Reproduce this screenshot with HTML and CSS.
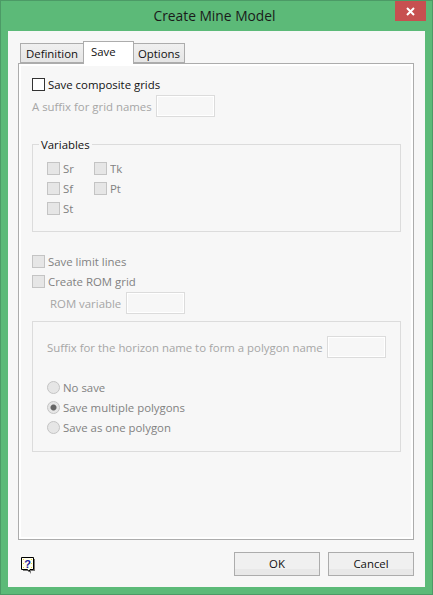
FILE: index.html
```html
<!DOCTYPE html>
<html>
<head>
<meta charset="utf-8">
<title>Create Mine Model</title>
<link rel="stylesheet" href="styles.css">
</head>
<body>
<div class="window">
    <div class="titlebar">
        Create Mine Model
        <div class="close">
            <svg width="9" height="9" viewBox="0 0 9 9"><path d="M1 1L8 8M8 1L1 8" stroke="#fff" stroke-width="2"/></svg>
        </div>
    </div>
    <div class="client">
        <div class="tabs">
            <div class="tab tab-def">Definition</div>
            <div class="tab tab-save active">Save</div>
            <div class="tab tab-opt">Options</div>
        </div>
        <div class="pane">
            <div class="row first"><span class="check on"></span><span class="dark">Save composite grids</span></div>
            <div class="field suffix"><span>A suffix for grid names</span><span class="input"></span></div>

            <div class="group vars">
                <div class="legend">Variables</div>
                <div class="var-grid">
                    <div class="row"><span class="check"></span><span class="muted">Sr</span></div>
                    <div class="row"><span class="check"></span><span class="muted">Tk</span></div>
                    <div class="row"><span class="check"></span><span class="muted">Sf</span></div>
                    <div class="row"><span class="check"></span><span class="muted">Pt</span></div>
                    <div class="row"><span class="check"></span><span class="muted">St</span></div>
                </div>
            </div>

            <div class="row limit"><span class="check"></span><span class="muted">Save limit lines</span></div>
            <div class="row rom"><span class="check"></span><span class="muted">Create ROM grid</span></div>
            <div class="field romvar"><span>ROM variable</span><span class="input"></span></div>

            <div class="group polys">
                <div class="field polyname"><span>Suffix for the horizon name to form a polygon name</span><span class="input"></span></div>
                <div class="radios">
                    <div class="row"><span class="radio"></span><span class="muted">No save</span></div>
                    <div class="row"><span class="radio sel"></span><span class="muted">Save multiple polygons</span></div>
                    <div class="row"><span class="radio"></span><span class="muted">Save as one polygon</span></div>
                </div>
            </div>
        </div>
        <div class="footer">
            <svg class="help" width="16" height="18" viewBox="0 0 16 18">
                <path d="M2 2H14V14H10V17L8 14H2Z" fill="#777" transform="translate(1 1)"/>
                <path d="M1.500 1.500H13.500V13.500H10L9 15.500L7.500 13.500H1.500Z" fill="#fffef0" stroke="#000"/>
                <path d="M3 3h1v1H3zM11 3h1v1h-1zM3 7h1v1H3zM11 7h1v1h-1zM3 11h1v1H3zM11 11h1v1h-1z" fill="#e6d83c"/>
                <text x="7.500" y="11.500" class="help-mark">?</text>
            </svg>
            <div class="buttons">
                <div class="btn">OK</div>
                <div class="btn">Cancel</div>
            </div>
        </div>
    </div>
</div>
</body>
</html>
```

FILE: styles.css
```css
html, body {
  margin: 0;
  padding: 0;
}

body {
  width: 433px;
  height: 595px;
  overflow: hidden;
  font-family: "Open Sans", "Noto Sans", sans-serif;
  font-size: 11.4px;
  color: #a6a6a6;
  white-space: nowrap;
}

.window {
  position: relative;
  box-sizing: border-box;
  width: 433px;
  height: 595px;
  background-color: #5cba78;
  border: 1px solid #4c9a66;
  padding: 0 7px 7px 7px;
}

.titlebar {
  height: 30px;
  line-height: 30px;
  text-align: center;
  font-size: 13.8px;
  color: #1a1a1a;
  padding-right: 4px;
}

.close {
  position: absolute;
  top: 0;
  right: 6px;
  width: 31px;
  height: 20px;
  background-color: #c75050;
  display: flex;
  align-items: center;
  justify-content: center;
}

.client {
  height: 556px;
  background-color: #f7f7f7;
  padding: 10px 11px 0 10px;
  box-sizing: border-box;
}

.tabs {
  display: flex;
  align-items: flex-end;
  height: 23px;
  padding-left: 2px;
  margin-bottom: -1px;
  position: relative;
  z-index: 1;
}

.tab {
  box-sizing: border-box;
  height: 20px;
  line-height: 19px;
  text-align: center;
  color: #111;
  background: linear-gradient(#f0f0f0, #e5e5e5);
  border: 1px solid #acacac;
  margin-bottom: 1px;
}

.tab-def {
  width: 63px;
  border-right: none;
}

.tab-save {
  width: 51px;
  height: 23px;
  background: #fff;
  margin-bottom: 0;
  border-bottom: none;
  line-height: 20px;
  text-align: left;
  padding-left: 7px;
}

.tab-opt {
  width: 51px;
  border-left: none;
}

.pane {
  box-sizing: border-box;
  height: 477px;
  border: 1px solid #acacac;
  box-shadow: inset 0 0 0 2px #fff;
  padding: 14px 12px 0 13px;
}

.row {
  display: flex;
  align-items: center;
  height: 13px;
  gap: 3px;
}

.dark {
  color: #111;
}

.muted {
  color: #6d6d6d;
  opacity: .85;
}

.check {
  box-sizing: border-box;
  width: 13px;
  height: 13px;
  background-color: #e6e6e6;
  border: 1px solid #c4c4c4;
  flex: none;
}

.check.on {
  background-color: #fff;
  border-color: #333;
}

.radio {
  box-sizing: border-box;
  width: 13px;
  height: 13px;
  border-radius: 50%;
  background-color: #e6e6e6;
  border: 1px solid #c4c4c4;
  flex: none;
}

.radio.sel {
  background: radial-gradient(circle, #666 0, #666 2.500px, #e6e6e6 3.500px);
}

.field {
  display: flex;
  align-items: center;
  justify-content: space-between;
}

.input {
  box-sizing: border-box;
  width: 59px;
  height: 22px;
  background-color: #f7f7f7;
  border: 1px solid #dcdcdc;
  box-shadow: inset 0 0 0 1px #fff;
  flex: none;
}

.suffix {
  width: 183px;
  margin-top: 4px;
}

.group {
  box-sizing: border-box;
  width: 369px;
  border: 1px solid #dcdcdc;
}

.vars {
  height: 88px;
  margin-top: 27px;
  padding: 18px 0 0 14px;
}

.legend {
  margin: -27px 0 9px -8px;
  padding: 0 2px;
  width: fit-content;
  line-height: 17px;
  background-color: #f7f7f7;
  color: #111;
}

.var-grid {
  display: grid;
  grid-template-columns: 47px 47px;
  row-gap: 7px;
}

.limit {
  margin-top: 23px;
}

.rom {
  margin-top: 7px;
}

.romvar {
  width: 135px;
  margin: 4px 0 0 18px;
}

.polys {
  height: 131px;
  margin-top: 7px;
  padding: 14px 14px 0 14px;
}

.radios {
  display: flex;
  flex-direction: column;
  gap: 7px;
  margin-top: 23px;
}

.footer {
  display: flex;
  justify-content: space-between;
  align-items: center;
  height: 24px;
  margin-top: 12px;
}

.help {
  margin: 2px 0 0 2px;
}

.help-mark {
  font-family: "Liberation Sans", sans-serif;
  font-size: 11px;
  font-weight: bold;
  fill: #1a1a9c;
  text-anchor: middle;
}

.buttons {
  display: flex;
  gap: 8px;
}

.btn {
  box-sizing: border-box;
  width: 86px;
  height: 24px;
  line-height: 22px;
  text-align: center;
  color: #111;
  background: linear-gradient(#f0f0f0 75%, #e8e8e8 75%);
  border: 1px solid #acacac;
}
```
